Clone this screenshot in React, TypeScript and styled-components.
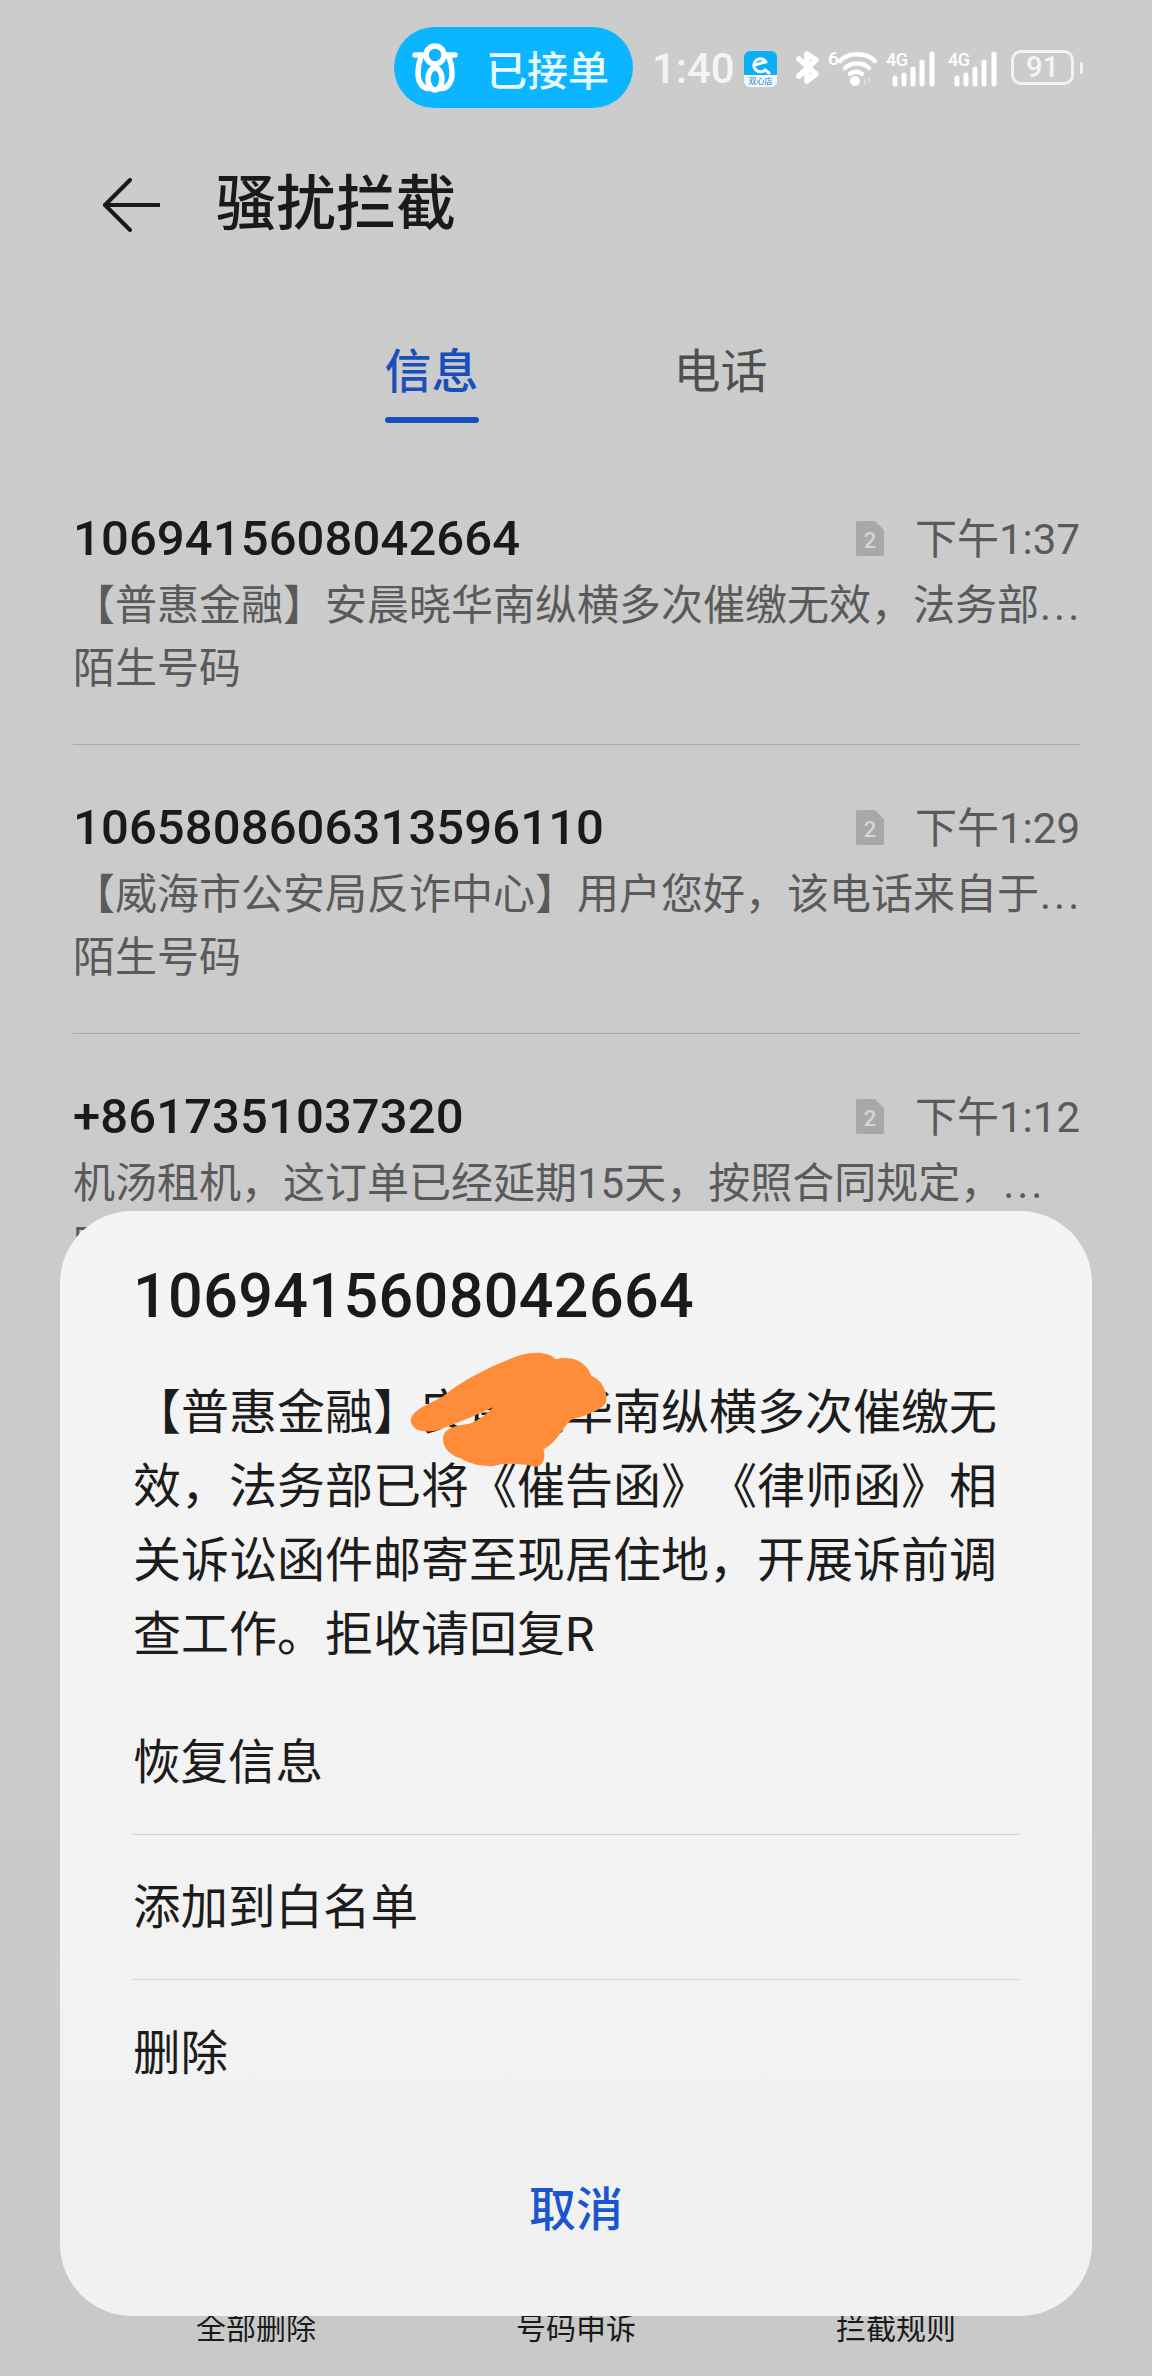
import styled, { createGlobalStyle } from "styled-components";

const GlobalStyle = createGlobalStyle`
  html, body {
    margin: 0;
    padding: 0;
    background: #cbcbcb;
  }
  * {
    box-sizing: border-box;
  }
`;

const FONT = `Roboto, "Noto Sans CJK SC", sans-serif`;

const messages = [
  {
    number: "1069415608042664",
    time: "下午1:37",
    text: "【普惠金融】安晨晓华南纵横多次催缴无效，法务部",
  },
  {
    number: "1065808606313596110",
    time: "下午1:29",
    text: "【威海市公安局反诈中心】用户您好，该电话来自于",
  },
  {
    number: "+8617351037320",
    time: "下午1:12",
    text: "机汤租机，这订单已经延期15天，按照合同规定，",
  },
];

const SignalIcon = ({ left }: { left: number }) => (
  <StatusSvg $left={left} width="50" height="36" viewBox="0 0 50 36">
    <text x="0" y="15" fontSize="18" fontWeight="500" fill="#fff" fontFamily="Roboto, sans-serif" textLength="22">
      4G
    </text>
    <g stroke="#fff" strokeWidth="5" strokeLinecap="round">
      <path d="M9 27V33" />
      <path d="M18 24V33" />
      <path d="M27 18V33" />
      <path d="M36 11V33" />
      <path d="M46 3V33" />
    </g>
  </StatusSvg>
);

const SimBadge = () => (
  <SimSvg width="28" height="35" viewBox="0 0 28 35">
    <path d="M2 0H19L28 9V33a2 2 0 0 1-2 2H2a2 2 0 0 1-2-2V2a2 2 0 0 1 2-2Z" fill="#a8a8a8" />
    <text x="14" y="27" fontSize="22" fontWeight="500" textAnchor="middle" fill="#d6d6d6" fontFamily="Roboto, sans-serif">
      2
    </text>
  </SimSvg>
);

export default function App() {
  return (
    <Screen lang="zh-CN">
      <GlobalStyle />

      <StatusBar>
        <OrderPill>
          <svg width="46" height="50" viewBox="0 0 46 50" fill="none" stroke="#fff" strokeWidth="5.5" strokeLinecap="round">
            <path d="M3 12H14" />
            <path d="M32 12H43" />
            <circle cx="23" cy="12" r="9" />
            <path d="M9 14C5 24 5 36 9 41C12 46 18 46 19 45" />
            <path d="M37 14C41 24 41 36 37 41C34 46 28 46 27 45" />
            <ellipse cx="23" cy="36" rx="7" ry="11" />
          </svg>
          <span>已接单</span>
        </OrderPill>
        <Clock>1:40</Clock>

        <StatusSvg $left={12} width="33" height="36" viewBox="0 0 33 36">
          <path d="M6 0H27a6 6 0 0 1 6 6V24H0V6a6 6 0 0 1 6-6Z" fill="#0bb0f4" />
          <path d="M0 24H33V30a6 6 0 0 1-6 6H6a6 6 0 0 1-6-6Z" fill="#f4f8fb" />
          <path d="M22 11A6.5 6.5 0 1 0 21 19L25 22M11 14L21 11" fill="none" stroke="#fff" strokeWidth="3" strokeLinecap="round" />
          <text x="16.5" y="33" fontSize="8" textAnchor="middle" fill="#1a80b8" fontFamily={FONT}>
            双心店
          </text>
        </StatusSvg>

        <StatusSvg $left={19} width="23" height="33" viewBox="0 0 23 33" fill="none" stroke="#fff" strokeWidth="5.5" strokeLinecap="round" strokeLinejoin="round">
          <path d="M3 8L20 23L11 30V3L20 9L3 25" />
        </StatusSvg>

        <StatusSvg $left={9} width="48" height="36" viewBox="0 0 48 36">
          <text x="0" y="14" fontSize="19" fontWeight="500" fill="#fff" fontFamily="Roboto, sans-serif">
            6
          </text>
          <g fill="none" stroke="#fff" strokeWidth="4.5" strokeLinecap="round">
            <path d="M12 10C20 1 38 1 47 10" />
            <path d="M17 17C23 11 35 11 41 17" />
            <path d="M22 23C25 20 31 20 34 23" />
          </g>
          <circle cx="27" cy="30" r="5" fill="#fff" />
          <path d="M37 28V34M41 26V32" stroke="#dcdcdc" strokeWidth="2" />
        </StatusSvg>

        <SignalIcon left={10} />
        <SignalIcon left={12} />

        <Battery>
          <BatteryBody>91</BatteryBody>
          <BatteryTip />
        </Battery>
      </StatusBar>

      <Header>
        <svg width="58" height="54" viewBox="0 0 58 54" fill="none" stroke="#1a1a1a" strokeWidth="4" strokeLinecap="round" strokeLinejoin="round">
          <path d="M28 2L3 27L28 52" />
          <path d="M3 27H57" />
        </svg>
        <Title>骚扰拦截</Title>
      </Header>

      <Tabs>
        <Tab $active>
          信息
          <TabLine />
        </Tab>
        <Tab>电话</Tab>
      </Tabs>

      <List>
        {messages.map((m) => (
          <Row key={m.number}>
            <RowHead>
              <Number>{m.number}</Number>
              <SimBadge />
              <Time>{m.time}</Time>
            </RowHead>
            <Preview>
              {m.text}
              <Dots>...</Dots>
            </Preview>
            <Preview>陌生号码</Preview>
          </Row>
        ))}
      </List>

      <BottomBar>
        <span>全部删除</span>
        <span>号码申诉</span>
        <span>拦截规则</span>
      </BottomBar>

      <Dialog>
        <DialogTitle>1069415608042664</DialogTitle>
        <DialogBody>【普惠金融】安晨晓华南纵横多次催缴无效，法务部已将《催告函》《律师函》相关诉讼函件邮寄至现居住地，开展诉前调查工作。拒收请回复R</DialogBody>
        <Actions>
          <Action>恢复信息</Action>
          <Action>添加到白名单</Action>
          <Action>删除</Action>
        </Actions>
        <Cancel>取消</Cancel>
      </Dialog>

      {/* scribble over the name in the message */}
      <Scribble width="196" height="118" viewBox="0 0 196 118">
        <path
          d="M3 76C6 64 22 60 40 50C62 32 96 16 125 6C142 1 158 2 166 10C184 6 200 12 206 28C218 32 226 48 222 58C214 68 196 72 183 76C172 86 168 100 152 108C156 118 150 130 140 126C128 124 110 122 96 126C80 128 62 120 60 118C48 116 36 104 40 92C44 84 56 82 70 80C80 76 88 70 96 62C74 72 50 82 30 88C14 90 4 86 3 76Z"
          fill="#ff8c38"
          transform="scale(0.89 0.92)"
        />
      </Scribble>
    </Screen>
  );
}

const Screen = styled.div`
  position: relative;
  width: 1152px;
  height: 2376px;
  overflow: hidden;
  display: flex;
  flex-direction: column;
  background: linear-gradient(#cccccc, #c9c9c9);
  font-family: ${FONT};
  color: #1a1a1a;
  text-spacing-trim: space-all;
`;

const StatusBar = styled.div`
  height: 135px;
  padding: 27px 0 0 394px;
  display: flex;
  align-items: flex-start;
`;

const OrderPill = styled.div`
  width: 239px;
  height: 81px;
  flex-shrink: 0;
  padding-left: 18px;
  border-radius: 41px;
  background: #0bb5ff;
  color: #e8faff;
  display: flex;
  align-items: center;
  gap: 28px;
  font-size: 41px;
  font-weight: 500;
`;

const Clock = styled.div`
  width: 80px;
  margin: 18px 0 0 19px;
  flex-shrink: 0;
  font-size: 42px;
  line-height: 48px;
  font-weight: 500;
  color: #f4f4f4;
`;

const StatusSvg = styled.svg<{ $left: number }>`
  flex-shrink: 0;
  overflow: visible;
  margin: 24px 0 0 ${(p) => p.$left}px;
`;

const Battery = styled.div`
  margin: 23px 0 0 13px;
  display: flex;
  align-items: center;
  gap: 6px;
`;

const BatteryBody = styled.div`
  width: 63px;
  height: 35px;
  border: 3px solid #f2f2f2;
  border-radius: 10px;
  color: #f4f4f4;
  font-size: 29px;
  line-height: 29px;
  font-weight: 500;
  text-align: center;
`;

const BatteryTip = styled.div`
  width: 3px;
  height: 12px;
  border-radius: 2px;
  background: #f2f2f2;
`;

const Header = styled.div`
  height: 140px;
  padding-left: 102px;
  display: flex;
  align-items: center;
  gap: 56px;
`;

const Title = styled.h1`
  margin: 0;
  font-size: 60px;
  font-weight: 500;
  line-height: 70px;
`;

const Tabs = styled.div`
  margin-top: 67px;
  display: flex;
  justify-content: center;
  gap: 195px;
`;

const Tab = styled.div<{ $active?: boolean }>`
  font-size: 47px;
  line-height: 60px;
  font-weight: ${(p) => (p.$active ? 500 : 400)};
  color: ${(p) => (p.$active ? "#1a4fbb" : "#4f4f4f")};
`;

const TabLine = styled.div`
  height: 6px;
  margin-top: 15px;
  border-radius: 3px;
  background: #1a4fbb;
`;

const List = styled.div`
  flex: 1;
  min-height: 0;
  padding: 33px 72px 0 73px;
  overflow: hidden;
`;

const Row = styled.div`
  height: 289px;
  padding-top: 48px;
  border-bottom: 1.5px solid #a9a9a9;
`;

const RowHead = styled.div`
  height: 69.5px;
  padding-bottom: 1.5px;
  display: flex;
  align-items: center;
`;

const Number = styled.div`
  flex: 1;
  font-size: 49px;
  font-weight: 500;
  letter-spacing: 0.1px;
`;

const SimSvg = styled.svg`
  margin-right: 31px;
`;

const Time = styled.div`
  padding-bottom: 6px;
  font-size: 42px;
  color: #5a5a5a;
`;

const Preview = styled.div`
  font-size: 42px;
  line-height: 63px;
  color: #5a5a5a;
  white-space: nowrap;
`;

const Dots = styled.span`
  margin-left: 1px;
  letter-spacing: 3px;
`;

const BottomBar = styled.div`
  height: 66px;
  padding: 0 96px 28px;
  display: grid;
  grid-template-columns: repeat(3, 1fr);
  align-items: center;
  justify-items: center;
  font-size: 30px;
  line-height: 32px;
  color: #1a1a1a;
`;

const Dialog = styled.div`
  position: absolute;
  left: 60px;
  top: 1211px;
  width: 1032px;
  height: 1105px;
  padding: 49px 73px 0;
  border-radius: 72px;
  background: linear-gradient(#f4f4f4, #f1f1f1);
`;

const DialogTitle = styled.div`
  font-size: 61px;
  line-height: 72px;
  font-weight: 500;
  letter-spacing: 0.4px;
`;

const DialogBody = styled.div`
  margin-top: 44px;
  font-size: 48px;
  line-height: 74px;
  color: #1c1c1c;
`;

const Actions = styled.div`
  margin-top: 17px;
`;

const Action = styled.div`
  height: 145.5px;
  padding-bottom: 6px;
  display: flex;
  align-items: center;
  font-size: 47.5px;
  color: #1c1c1c;
  border-bottom: 1.5px solid #d2d2d2;

  &:last-child {
    border-bottom: none;
  }
`;

const Cancel = styled.div`
  margin-top: 40px;
  height: 80px;
  display: flex;
  align-items: center;
  justify-content: center;
  font-size: 47px;
  font-weight: 500;
  color: #1a56cf;
`;

const Scribble = styled.svg`
  position: absolute;
  left: 408px;
  top: 1350px;
  overflow: visible;
`;
